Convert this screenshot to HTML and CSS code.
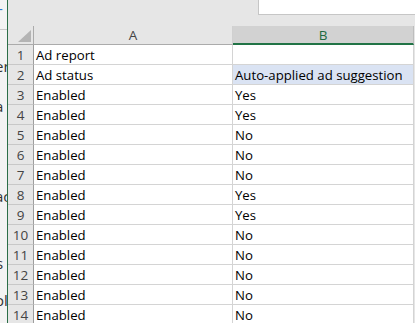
FILE: index.html
```html
<!DOCTYPE html>
<html lang="en">
<head>
  <meta charset="UTF-8">
  <title>Ad report</title>
  <link rel="stylesheet" href="styles.css">
</head>
<body>

<div class="app">
  <div class="strip">
    <div class="strip-top"><span class="blue-dash">-</span></div>
    <div class="strip-frag f1">er</div>
    <div class="strip-frag f2">a</div>
    <div class="strip-frag f3">ac</div>
    <div class="strip-frag f4">s</div>
    <div class="strip-frag f5">ol</div>
  </div>

  <div class="main">
    <div class="topbar">
      <div class="namebox"></div>
    </div>

    <div class="sheet">
      <div class="corner"><span class="tri"></span></div>
      <div class="col-head">A</div>
      <div class="col-head active">B</div>

      <div class="row-head">1</div><div class="cell">Ad report</div><div class="cell"></div>
      <div class="row-head">2</div><div class="cell">Ad status</div><div class="cell selected">Auto-applied ad suggestion</div>
      <div class="row-head">3</div><div class="cell">Enabled</div><div class="cell">Yes</div>
      <div class="row-head">4</div><div class="cell">Enabled</div><div class="cell">Yes</div>
      <div class="row-head">5</div><div class="cell">Enabled</div><div class="cell">No</div>
      <div class="row-head">6</div><div class="cell">Enabled</div><div class="cell">No</div>
      <div class="row-head">7</div><div class="cell">Enabled</div><div class="cell">No</div>
      <div class="row-head">8</div><div class="cell">Enabled</div><div class="cell">Yes</div>
      <div class="row-head">9</div><div class="cell">Enabled</div><div class="cell">Yes</div>
      <div class="row-head">10</div><div class="cell">Enabled</div><div class="cell">No</div>
      <div class="row-head">11</div><div class="cell">Enabled</div><div class="cell">No</div>
      <div class="row-head">12</div><div class="cell">Enabled</div><div class="cell">No</div>
      <div class="row-head">13</div><div class="cell">Enabled</div><div class="cell">No</div>
      <div class="row-head">14</div><div class="cell">Enabled</div><div class="cell">No</div>
    </div>
  </div>
</div>

</body>
</html>
```

FILE: styles.css
```css
body {
  margin: 0;
  width: 415px;
  height: 323px;
  overflow: hidden;
  font-family: 'Open Sans', 'Noto Sans', sans-serif;
  color: #000;
  background: #e6e6e6;
}
.app {
  display: flex;
  height: 323px;
}
.strip {
  width: 7px;
  flex-shrink: 0;
  background: #f3f3f3;
  border-right: 1px solid #2b6e47;
  overflow: hidden;
  display: flex;
  flex-direction: column;
  font-size: 15px;
  color: #333;
  white-space: nowrap;
}
.strip-top {
  height: 29px;
  flex-shrink: 0;
  border-bottom: 1px solid #c8c8c8;
  line-height: 16px;
}
.blue-dash {
  color: #2f7ad0;
  margin-left: -2px;
}
.strip-frag {
  flex-shrink: 0;
  line-height: 18px;
  text-indent: -5px;
}
.f1 { margin-top: 27px; }
.f2 { margin-top: 22px; }
.f3 { margin-top: 72px; }
.f4 { margin-top: 49px; text-indent: -4px; }
.f5 { margin-top: 19px; }
.main {
  flex: 1;
  display: flex;
  flex-direction: column;
}
.topbar {
  height: 26px;
  flex-shrink: 0;
  display: flex;
  justify-content: flex-end;
  align-items: flex-start;
}
.namebox {
  width: 156px;
  height: 14px;
  background: #fff;
  border-left: 1px solid #c6c6c6;
  border-bottom: 1px solid #c6c6c6;
}
.sheet {
  flex-shrink: 0;
  display: grid;
  grid-template-columns: 26px 199px 181px;
  grid-auto-rows: 20px;
  grid-template-rows: 19px;
  background: #fff;
  width: 406px;
}
.corner {
  background: #e6e6e6;
  border-right: 1px solid #ababab;
  border-bottom: 1px solid #ababab;
  display: flex;
  justify-content: flex-end;
  align-items: flex-end;
  padding: 0 2px 2px 0;
}
.tri {
  width: 13px;
  height: 12px;
  background: #b4b4b4;
  clip-path: polygon(100% 0, 100% 100%, 0 100%);
}
.col-head {
  background: #e6e6e6;
  border-right: 1px solid #d0d0d0;
  border-bottom: 1px solid #ababab;
  text-align: center;
  font-size: 13.5px;
  line-height: 19px;
  color: #444;
}
.col-head.active {
  background: #d2d2d2;
  color: #1f6b41;
  border-right: 1px solid #bdbdbd;
  border-bottom: 2px solid #217346;
  line-height: 18px;
}
.row-head {
  background: #e6e6e6;
  border-right: 1px solid #9e9e9e;
  border-bottom: 1px solid #c8c8c8;
  text-align: center;
  font-size: 13.5px;
  line-height: 20px;
  color: #444;
}
.cell {
  border-right: 1px solid #d4d4d4;
  border-bottom: 1px solid #d4d4d4;
  padding-left: 2px;
  font-size: 13.2px;
  line-height: 20px;
  white-space: nowrap;
  overflow: hidden;
}
.cell.selected {
  background: #dae3f3;
}
```
